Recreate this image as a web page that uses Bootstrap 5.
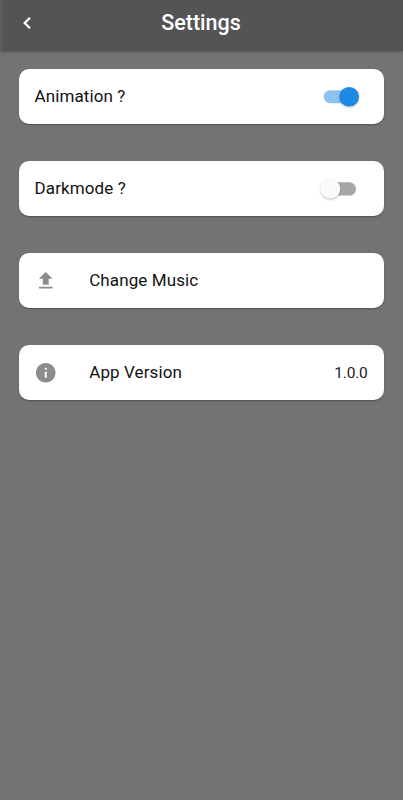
<!DOCTYPE html>
<html lang="en">
<head>
<meta charset="utf-8">
<meta name="viewport" content="width=device-width, initial-scale=1">
<title>Settings</title>
<link href="https://cdn.jsdelivr.net/npm/bootstrap@5.3.0/dist/css/bootstrap.min.css" rel="stylesheet">
<style>
body{background:#737373;font-family:Roboto,"Liberation Sans",sans-serif;color:#121212}
.app-bar{height:51px;background:linear-gradient(90deg,#5e5e5e,#545454 5px);box-shadow:0 1px 3px rgba(0,0,0,.28);display:grid;grid-template-columns:54px 1fr 55px;padding-bottom:5px}
.app-title{font-size:21.5px;font-weight:500;line-height:26px;color:#fff;white-space:nowrap}
.settings-list{padding:18.4px 18.6px;gap:37.2px}
.setting{height:54.8px;border:0;border-radius:10px;padding:0 16px;background:#fff;box-shadow:0 1px 1.5px rgba(0,0,0,.3)}
.setting-label{font-size:17px;line-height:24px;letter-spacing:.1px;padding-bottom:2px;white-space:nowrap}
.setting-icon{width:54.6px}
.setting-icon svg{margin-left:-.4px}
.version{font-size:15.5px;letter-spacing:-.2px;line-height:24px;color:#222;padding-right:.8px}
svg{display:block}
.switch{margin-right:5px}
</style>
<script src="https://cdn.jsdelivr.net/npm/bootstrap@5.3.0/dist/js/bootstrap.bundle.min.js"></script>
</head>
<body>
<header class="app-bar align-items-center">
  <a href="#" class="d-flex justify-content-center" aria-label="Back"><svg width="12" height="14" viewBox="0 0 12 14" fill="none" stroke="#fff" stroke-width="2.3"><path d="M9 1.7 3.7 7 9 12.3"/></svg></a>
  <h1 class="app-title text-center m-0">Settings</h1>
</header>
<main class="settings-list d-flex flex-column">
  <div class="card setting flex-row align-items-center justify-content-between">
    <span class="setting-label">Animation ?</span>
    <svg class="switch overflow-visible" width="42" height="26" viewBox="0 0 42 26" role="switch" aria-checked="true"><rect x="2.7" y="6.2" width="32" height="13" rx="6.5" fill="#8ec1ef"/><circle class="knob" cx="28.2" cy="12.7" r="9.8" fill="#1e88e5" style="filter:drop-shadow(0 1px 1px rgba(0,0,0,.22))"/></svg>
  </div>
  <div class="card setting flex-row align-items-center justify-content-between">
    <span class="setting-label">Darkmode ?</span>
    <svg class="switch overflow-visible" width="42" height="26" viewBox="0 0 42 26" role="switch" aria-checked="false"><rect x="3" y="6.2" width="32" height="13.4" rx="6.7" fill="#a6a6a6"/><circle class="knob" cx="9.4" cy="12.7" r="9.9" fill="#fafafa" style="filter:drop-shadow(0 1px 1px rgba(0,0,0,.25))"/></svg>
  </div>
  <div class="card setting flex-row align-items-center">
    <span class="setting-icon"><svg width="23.5" height="23.5" viewBox="0 0 24 24" fill="#8c8c8c"><path d="M9 16h6v-6h4l-7-7-7 7h4zm-4 2h14v2H5z"/></svg></span>
    <span class="setting-label">Change Music</span>
  </div>
  <div class="card setting flex-row align-items-center">
    <span class="setting-icon"><svg width="23.5" height="23.5" viewBox="0 0 24 24" fill="#8c8c8c"><path d="M12 2C6.48 2 2 6.48 2 12s4.48 10 10 10 10-4.48 10-10S17.52 2 12 2zm1 15h-2v-6h2v6zm0-8h-2V7h2v2z"/></svg></span>
    <span class="setting-label">App Version</span>
    <span class="version ms-auto">1.0.0</span>
  </div>
</main>
</body>
</html>
